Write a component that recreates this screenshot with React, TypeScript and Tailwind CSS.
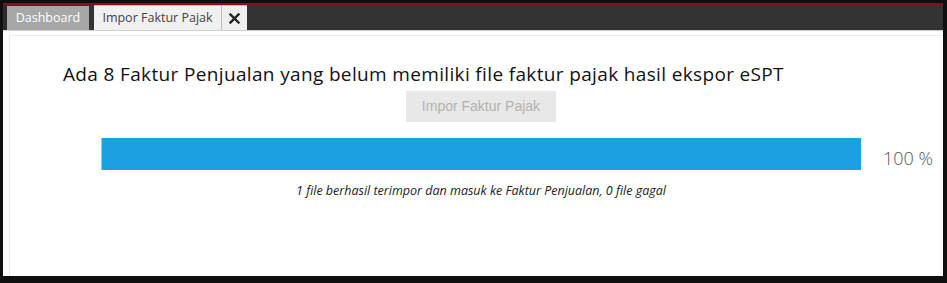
import React from "react";

export default function App() {
  return (
    <div className="w-[947px] h-[283px] bg-[#0f0f0f] pl-[3px] pt-[3px] pr-[4px] pb-[7px] flex flex-col" style={{ fontFamily: '"Open Sans", "Noto Sans", sans-serif' }}>
      <div className="h-[2px] bg-[#8a0c22] shrink-0" />
      <div className="h-[25px] bg-[#333333] flex items-end shrink-0">
        <div className="w-[4px] h-full bg-[#2c2c2c]" />
        <div className="h-[24px] w-[82px] bg-[#a7a7a7] text-white text-[12.5px] flex items-center justify-center">Dashboard</div>
        <div className="w-[5px]" />
        <div className="h-[25px] w-[127px] bg-[#f0f0f0] border-t border-[#7ccbec] text-[#444] text-[12.5px] flex items-center justify-center">Impor Faktur Pajak</div>
        <div className="h-[25px] w-[1px] bg-[#bdbdbd]" />
        <div className="h-[25px] w-[25px] bg-[#efefef] border-t border-[#7ccbec] text-[#222] flex items-center justify-center">
          <svg width="11" height="11" viewBox="0 0 11 11"><path d="M1.5 1.5 L9.5 9.5 M9.5 1.5 L1.5 9.5" stroke="#222" strokeWidth="2.4" strokeLinecap="square" /></svg>
        </div>
      </div>
      <div className="flex-1 bg-white border-t border-[#d0d0d0] pl-[6px] pt-[4px] flex flex-col">
        <div className="flex-1 border-l border-t border-[#ececec] flex flex-col">
          <div className="pl-[53px] pt-[26px] text-[19px] tracking-[0.35px] leading-[24px] text-[#111]">
            Ada 8 Faktur Penjualan yang belum memiliki file faktur pajak hasil ekspor eSPT
          </div>
          <div className="flex items-start">
            <div className="ml-[91px] w-[760px] flex flex-col items-center">
              <div className="mt-[5px] w-[150px] h-[31px] bg-[#e8e8e8] text-[#b2b2b2] text-[14px] flex items-center justify-center" style={{ fontFamily: '"Liberation Sans", Arial, sans-serif' }}>
                Impor Faktur Pajak
              </div>
              <div className="mt-[16px] w-[760px] h-[32px] bg-[#1ba1e2] border-l border-[#8fd0f0]" />
              <div className="mt-[12px] text-[12.5px] italic text-[#222] leading-[18px]">
                1 file berhasil terimpor dan masuk ke Faktur Penjualan, 0 file gagal
              </div>
            </div>
            <div className="ml-[22px] mt-[60px] text-[18px] font-light text-[#555] leading-[24px]">100 %</div>
          </div>
        </div>
      </div>
    </div>
  );
}
